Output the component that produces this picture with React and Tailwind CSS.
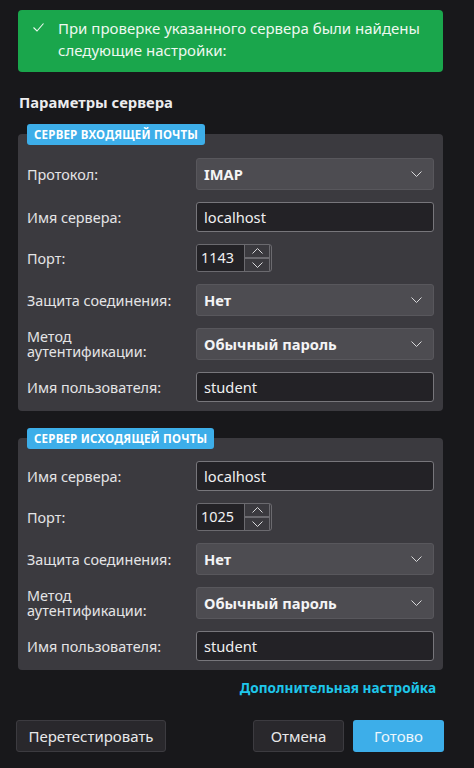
import React from 'react';

// Диалог настройки учётной записи: найденные параметры сервера
const font = { fontFamily: '"Noto Sans", "Open Sans", sans-serif' };

function Chevron({ up = false, className = '' }) {
  return (
    <svg width="11" height="6" viewBox="0 0 11 6" className={className} fill="none">
      <path
        d={up ? 'M0.5 5.5L5.5 0.5L10.5 5.5' : 'M0.5 0.5L5.5 5.5L10.5 0.5'}
        stroke="#d8d8da"
        strokeWidth="1"
      />
    </svg>
  );
}

function Label({ children }) {
  return <div className="w-[169px] shrink-0 text-[14.4px] leading-[15px] text-[#e4e4e6]">{children}</div>;
}

function Select({ value }) {
  return (
    <div className="flex h-8 flex-1 items-center justify-between rounded-[3px] border border-[#58575c] bg-[#4d4c51] pl-[7px] pr-[11px]">
      <span className="text-[14.67px] font-bold text-[#f4f4f5]">{value}</span>
      <Chevron />
    </div>
  );
}

function Input({ value }) {
  return (
    <div className="flex h-[30px] flex-1 items-center rounded-[3px] border border-[#77767b] bg-[#232226] px-[7px]">
      <span className="text-[14.67px] text-[#f0f0f1]">{value}</span>
    </div>
  );
}

function Spin({ value }) {
  return (
    <div className="flex h-7 w-[76px] overflow-hidden rounded-[3px] border border-[#6b6a6f] bg-[#3b3a3f]">
      <div className="flex w-[47px] items-center bg-[#232226] pl-[4px] text-[14.4px] text-[#f0f0f1]">{value}</div>
      <div className="flex w-[26px] flex-col border-x border-[#6b6a6f]">
        <div className="flex flex-1 items-center justify-center border-b-2 border-[#6b6a6f]">
          <Chevron up />
        </div>
        <div className="flex flex-1 items-center justify-center">
          <Chevron />
        </div>
      </div>
    </div>
  );
}

function Row({ label, children }) {
  return (
    <div className="flex items-center">
      <Label>{label}</Label>
      {children}
    </div>
  );
}

function ServerCard({ title, incoming }) {
  return (
    <div className={`relative rounded-[4px] bg-[#3b3a3f] px-[9px] pb-[9px] ${incoming ? 'pt-6' : 'pt-[23px]'}`}>
      <div className="absolute -top-[10px] left-[9px] rounded-[3px] bg-[#3daee9] px-[7px] py-[2px] text-[11.5px] font-bold leading-[17px] tracking-[0.2px] text-white">
        {title}
      </div>
      <div className="flex flex-col gap-3">
        {incoming && (
          <Row label="Протокол:">
            <Select value="IMAP" />
          </Row>
        )}
        <Row label="Имя сервера:">
          <Input value="localhost" />
        </Row>
        <Row label="Порт:">
          <Spin value={incoming ? '1143' : '1025'} />
        </Row>
        <Row label="Защита соединения:">
          <Select value="Нет" />
        </Row>
        <Row label={<>Метод<br />аутентификации:</>}>
          <Select value="Обычный пароль" />
        </Row>
        <Row label="Имя пользователя:">
          <Input value="student" />
        </Row>
      </div>
    </div>
  );
}

export default function App() {
  return (
    <div className="h-[768px] w-[474px] overflow-hidden bg-[#18181b] pl-[18px] pr-[31px] pt-[10px]" style={font}>
      <div className="flex rounded-[4px] bg-[#1aa64c] pb-[11px] pt-[7px] text-[15px] leading-[22px] text-[#eef8f0]">
        <div className="ml-[15px] mr-[14px] shrink-0 pt-[6px]">
          <svg width="11" height="9" viewBox="0 0 11 9" fill="none">
            <path d="M0.5 4.5L4 8L10.5 0.5" stroke="#eef8f0" strokeWidth="1.1" />
          </svg>
        </div>
        <div>При проверке указанного сервера были найдены следующие настройки:</div>
      </div>

      <div className="mt-[20px] mb-[22px] pl-[1px] text-[14.8px] font-bold leading-[20px] text-[#ececee]">
        Параметры сервера
      </div>

      <ServerCard title="СЕРВЕР ВХОДЯЩЕЙ ПОЧТЫ" incoming />
      <div className="h-[27px]" />
      <ServerCard title="СЕРВЕР ИСХОДЯЩЕЙ ПОЧТЫ" />

      <div className="mt-[8px] flex justify-end pr-[7px]">
        <span className="text-[13.6px] font-bold leading-[20px] text-[#1ec6ea]">Дополнительная настройка</span>
      </div>

      <div className="-ml-[2px] mt-[22px] flex w-[428px] items-center">
        <button className="h-8 w-[150px] rounded-[3px] border border-[#3c3b40] bg-[#29282c] text-[15px] text-[#e8e8ea]">
          Перетестировать
        </button>
        <div className="flex-1" />
        <button className="h-8 w-[91px] rounded-[3px] border border-[#3c3b40] bg-[#29282c] text-[15px] text-[#e8e8ea]">
          Отмена
        </button>
        <button className="ml-[9px] h-8 w-[91px] rounded-[3px] bg-[#3daee9] text-[15px] text-[#eef7fc]">
          Готово
        </button>
      </div>
    </div>
  );
}
